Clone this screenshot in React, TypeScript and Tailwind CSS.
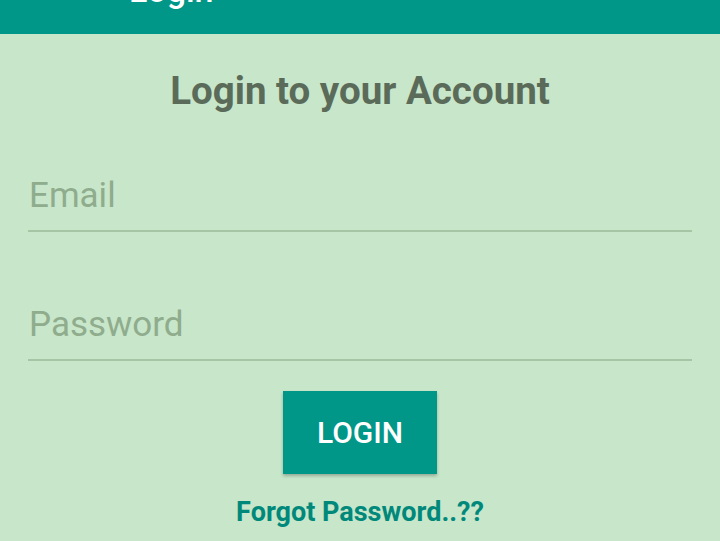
import React from "react";

export default function App() {
  return (
    <div
      className="w-[720px] h-[541px] overflow-hidden bg-[#c8e6c9] flex flex-col"
      style={{ fontFamily: "Roboto, 'Noto Sans', sans-serif" }}
    >
      <div className="h-[34px] bg-[#009688] overflow-hidden shrink-0 pl-[129px]">
        <div className="text-[34px] font-medium leading-[34px] text-white -mt-[27px]">Login</div>
      </div>
      <div className="flex flex-col items-center pt-[35px]">
        <h1 className="text-[38.5px] font-bold leading-[44px] text-[#5b6b59]">Login to your Account</h1>
      </div>
      <div className="px-[28px] pt-[49px] flex flex-col">
        <div className="border-b-2 border-[#a6c5a4] h-[70px] flex items-center pl-[1px]">
          <span className="text-[35px] text-[#8fac8d] leading-[40px]">Email</span>
        </div>
        <div className="border-b-2 border-[#a6c5a4] h-[70px] flex items-center pl-[1px] mt-[59px]">
          <span className="text-[35px] text-[#8fac8d] leading-[40px]">Password</span>
        </div>
      </div>
      <div className="flex flex-col items-center pt-[30px]">
        <button className="w-[154px] h-[83px] bg-[#009688] text-white text-[30px] font-medium shadow-[0_2px_3px_rgba(0,0,0,0.25)] flex items-center justify-center">
          LOGIN
        </button>
        <div className="mt-[24px] text-[27px] font-bold text-[#00897b] leading-[28px]">Forgot Password..??</div>
      </div>
    </div>
  );
}
